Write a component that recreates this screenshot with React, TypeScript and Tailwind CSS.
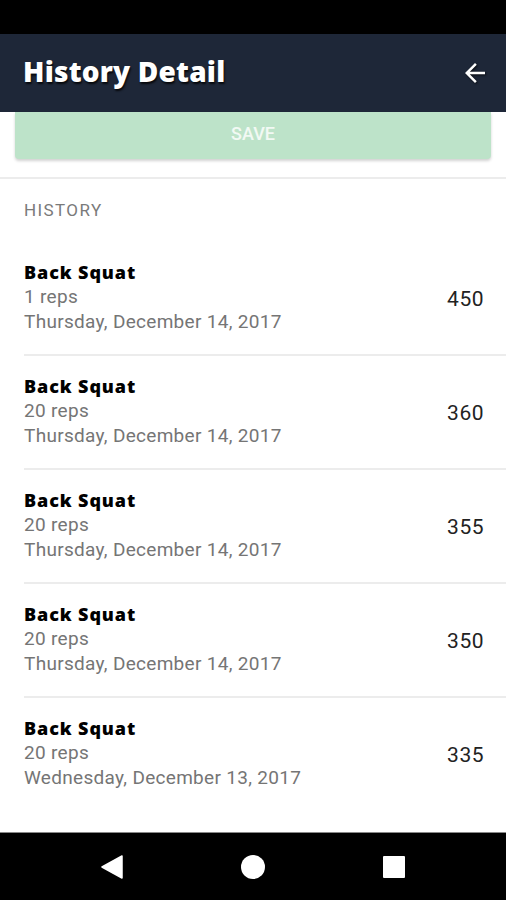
import React from "react";

const items = [
  { reps: "1 reps", date: "Thursday, December 14, 2017", value: "450" },
  { reps: "20 reps", date: "Thursday, December 14, 2017", value: "360" },
  { reps: "20 reps", date: "Thursday, December 14, 2017", value: "355" },
  { reps: "20 reps", date: "Thursday, December 14, 2017", value: "350" },
  { reps: "20 reps", date: "Wednesday, December 13, 2017", value: "335" },
];

export default function App() {
  return (
    <div className="w-[506px] h-[900px] flex flex-col bg-white overflow-hidden" style={{ fontFamily: "Roboto, 'Liberation Sans', sans-serif" }}>
      <div className="h-[34px] bg-black shrink-0" />
      <div className="h-[78px] bg-[#1e2738] shrink-0 flex items-center justify-between pl-[23px] pr-[16px]">
        <h1
          className="text-white text-[28px] font-extrabold tracking-[0.2px] mb-[5px]"
          style={{ fontFamily: "'Open Sans', 'Noto Sans', sans-serif", textShadow: "1px 2px 2px rgba(0,0,0,0.8)" }}
        >
          History Detail
        </h1>
        <svg width="30" height="30" viewBox="0 0 24 24" className="mb-[1px] drop-shadow-[1px_1px_1px_rgba(0,0,0,0.7)]">
          <path fill="white" d="M20 11H7.83l5.59-5.59L12 4l-8 8 8 8 1.41-1.41L7.83 13H20v-2z" />
        </svg>
      </div>
      <div className="flex-1 flex flex-col">
        <div className="px-[15px] pb-[18px] border-b-2 border-[#ececec]">
          <div className="h-[47px] pb-[4px] bg-[#bde3c9] rounded-b-[4px] shadow-[0_2px_3px_rgba(0,0,0,0.18)] flex items-center justify-center text-[18px] font-medium text-white/80">
            SAVE
          </div>
        </div>
        <div className="h-[63px] pl-[24px] pt-[19px] text-[17px] tracking-[1.4px] text-[#7a7a7a] leading-[24px]">HISTORY</div>
        {items.map((it, i) => (
          <div
            key={i}
            className={`ml-[24px] pr-[22px] pt-[17px] pb-[20px] flex items-center justify-between ${i < items.length - 1 ? "border-b-2 border-[#ececec] h-[114px]" : "h-[112px]"}`}
          >
            <div className="flex flex-col">
              <div className="text-[18px] font-extrabold text-black leading-[25px] tracking-[0.9px]" style={{ fontFamily: "'Open Sans', 'Noto Sans', sans-serif" }}>
                Back Squat
              </div>
              <div className="text-[19px] text-[#757575] leading-[25px] tracking-[0.3px] -mt-[1px]">{it.reps}</div>
              <div className="text-[19px] text-[#757575] leading-[25px] tracking-[0.3px]">{it.date}</div>
            </div>
            <div className="text-[21px] text-[#222] mt-[6px] tracking-[0.5px]">{it.value}</div>
          </div>
        ))}
      </div>
      <div className="h-[68px] shrink-0 bg-black border-t border-[#888] flex items-center justify-center gap-[118px]">
        <svg width="22" height="24" viewBox="0 0 22 24">
          <path d="M21 1 L1 12 L21 23 Z" fill="white" stroke="white" strokeWidth="1.5" strokeLinejoin="round" />
        </svg>
        <div className="w-[24px] h-[24px] rounded-full bg-white" />
        <div className="w-[22px] h-[22px] bg-white rounded-[1px]" />
      </div>
    </div>
  );
}
